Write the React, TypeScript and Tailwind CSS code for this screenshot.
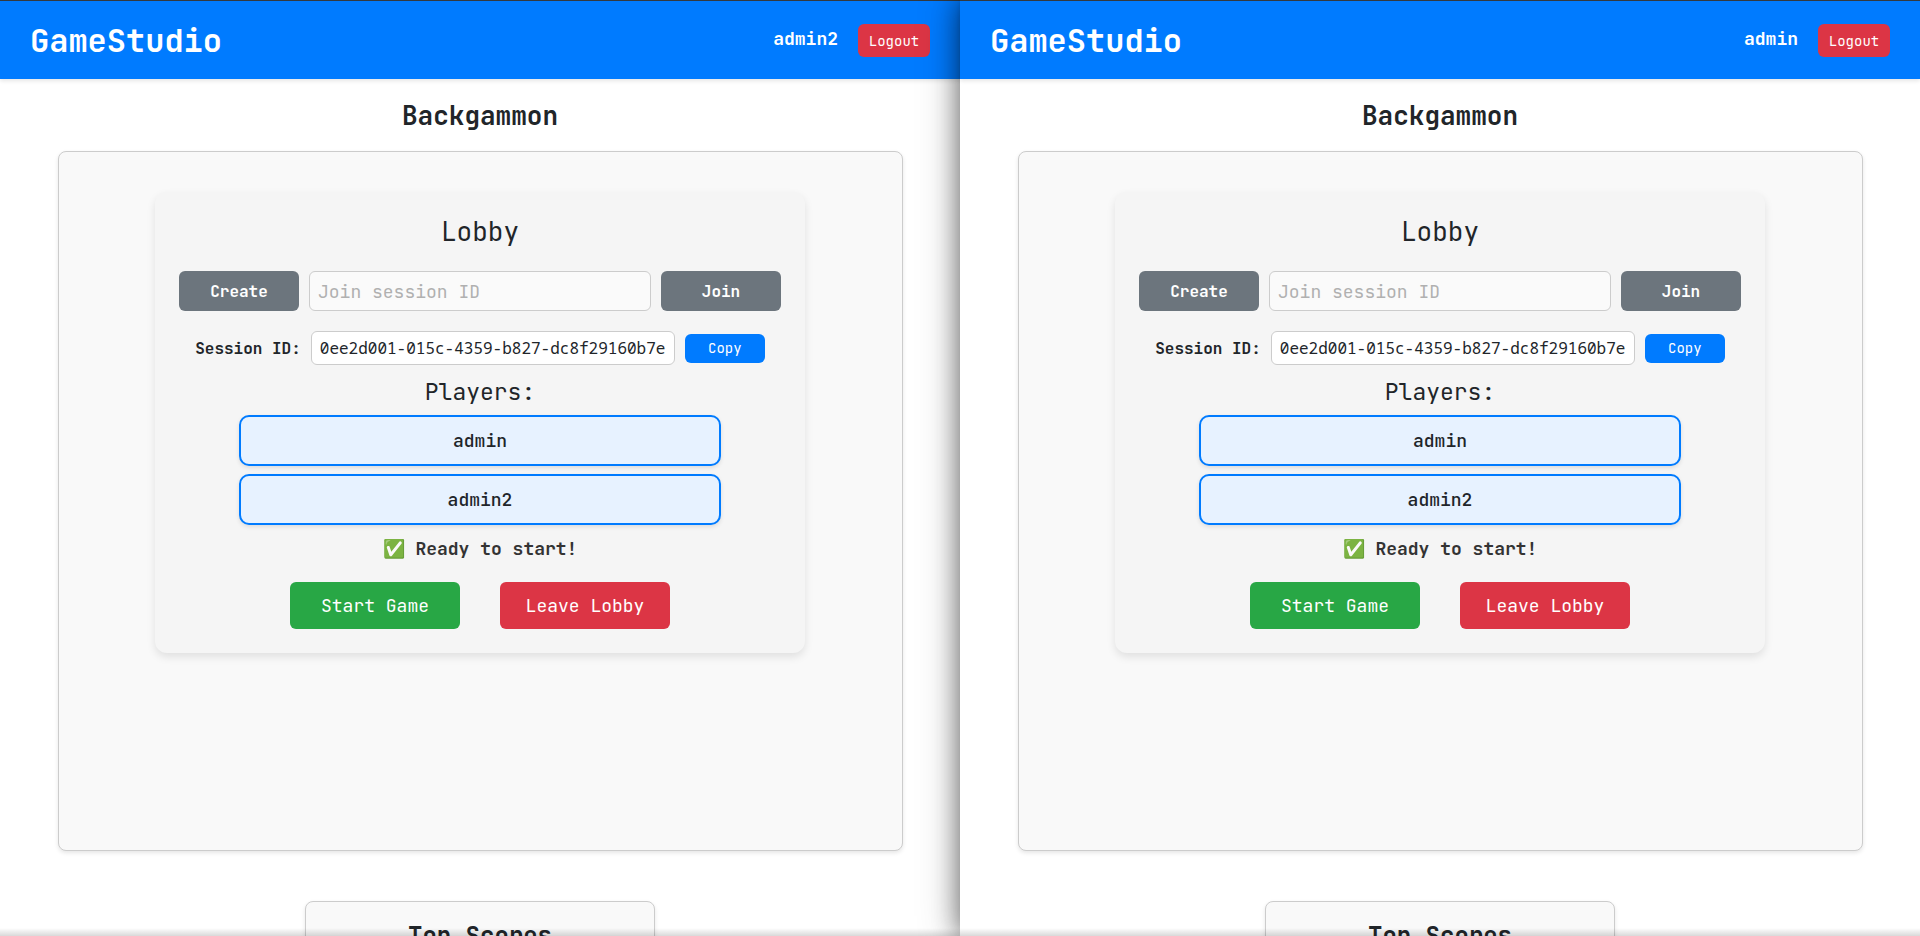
import { useId, useState } from 'react'

const mono = "font-['JetBrains_Mono','DejaVu_Sans_Mono',monospace]"
const players = ['admin', 'admin2']
const sessionId = '0ee2d001-015c-4359-b827-dc8f29160b7e'

function GameWindow({ user, className }: { user: string; className: string }) {
  const id = useId()
  const [join, setJoin] = useState('')
  return (
    <section className={`min-w-0 flex-1 bg-white text-[#212529] ${className}`}>
      <header className="flex h-[79px] items-center justify-between border-t border-[#33393f] bg-[#007bff] px-[30px] pt-px text-white shadow-[0_2px_4px_rgba(0,0,0,0.1)]">
        <a href="#home" className="text-[32px] leading-10 font-bold">GameStudio</a>
        <div className="flex items-center gap-5">
          <span className="pb-[3px] text-lg leading-7 font-bold">{user}</span>
          <button type="button" className="h-[33px] w-[72px] rounded-md bg-[#dc3545] text-sm">Logout</button>
        </div>
      </header>

      <main className="flex flex-col items-center">
        <h1 className="pt-[19px] pb-[17px] text-[26px] leading-9 font-bold">Backgammon</h1>

        <div className="flex h-[700px] w-full max-w-[845px] flex-col items-center rounded-lg border border-[#ccc] bg-[#f9f9f9] pt-10 shadow-[0_2px_4px_rgba(0,0,0,0.1)]">
          <div className="flex w-full max-w-[650px] flex-col items-center rounded-xl bg-[#f5f5f5] p-6 shadow-[0_4px_8px_rgba(0,0,0,0.1)]">
            <h2 className="mb-[23px] text-[26px] leading-8">Lobby</h2>

            <form className="flex w-full gap-2.5" onSubmit={(e) => e.preventDefault()}>
              <button type="button" className="h-10 w-[120px] rounded-md bg-[#6c757d] pt-0.5 font-bold text-white">Create</button>
              <input
                aria-label="Join session ID"
                placeholder="Join session ID"
                value={join}
                onChange={(e) => setJoin(e.target.value)}
                className="h-10 min-w-0 flex-1 rounded-md border border-[#ccc] bg-[#fafafa] px-2 text-lg placeholder:text-[#b0b0b0]"
              />
              <button type="submit" className="h-10 w-[120px] rounded-md bg-[#6c757d] pt-0.5 font-bold text-white">Join</button>
            </form>

            <div className="mt-5 flex items-center gap-2.5">
              <label htmlFor={id} className="pt-0.5 font-bold">Session ID:</label>
              <input
                id={id}
                readOnly
                value={sessionId}
                className="h-[34px] w-[364px] rounded-md border border-[#ccc] bg-white px-2 font-['Noto_Sans_Mono','DejaVu_Sans_Mono',monospace] text-base"
              />
              <button type="button" className="h-[29px] w-20 rounded-md bg-[#007bff] text-sm text-white">Copy</button>
            </div>

            <h3 className="mt-2 mb-1 text-[23px] leading-[38px]">Players:</h3>
            <ul className="flex w-4/5 flex-col gap-2">
              {players.map((name) => (
                <li key={name} className="flex h-[51px] items-center justify-center rounded-[10px] border-2 border-[#007bff] bg-[#e7f2ff] text-lg font-medium shadow-[0_2px_4px_rgba(0,0,0,0.1)]">
                  {name}
                </li>
              ))}
            </ul>

            <p className="mt-2.5 text-lg leading-7 font-bold text-[#333]">✅ Ready to start!</p>

            <div className="mt-[19px] flex gap-10">
              <button type="button" className="h-[47px] w-[170px] rounded-md bg-[#28a745] text-lg text-white">Start Game</button>
              <button type="button" className="h-[47px] w-[170px] rounded-md bg-[#dc3545] text-lg text-white">Leave Lobby</button>
            </div>
          </div>
        </div>

        <section className="mt-[50px] w-[350px] rounded-lg border border-[#ccc] bg-[#f9f9f9] p-5 text-center shadow-[0_2px_4px_rgba(0,0,0,0.1)]">
          <h2 className="text-2xl leading-7 font-bold">Top Scores</h2>
        </section>
      </main>
    </section>
  )
}

export default function App() {
  return (
    <div className={`relative flex h-screen overflow-hidden ${mono}`}>
      <GameWindow user="admin2" className="" />
      <GameWindow user="admin" className="z-10 shadow-[0_0_40px_rgba(0,0,0,0.3),0_0_24px_rgba(0,0,0,0.45)]" />
      <div className="pointer-events-none absolute inset-x-0 bottom-0 z-20 h-2 bg-linear-to-b from-transparent to-black/15" />
    </div>
  )
}
